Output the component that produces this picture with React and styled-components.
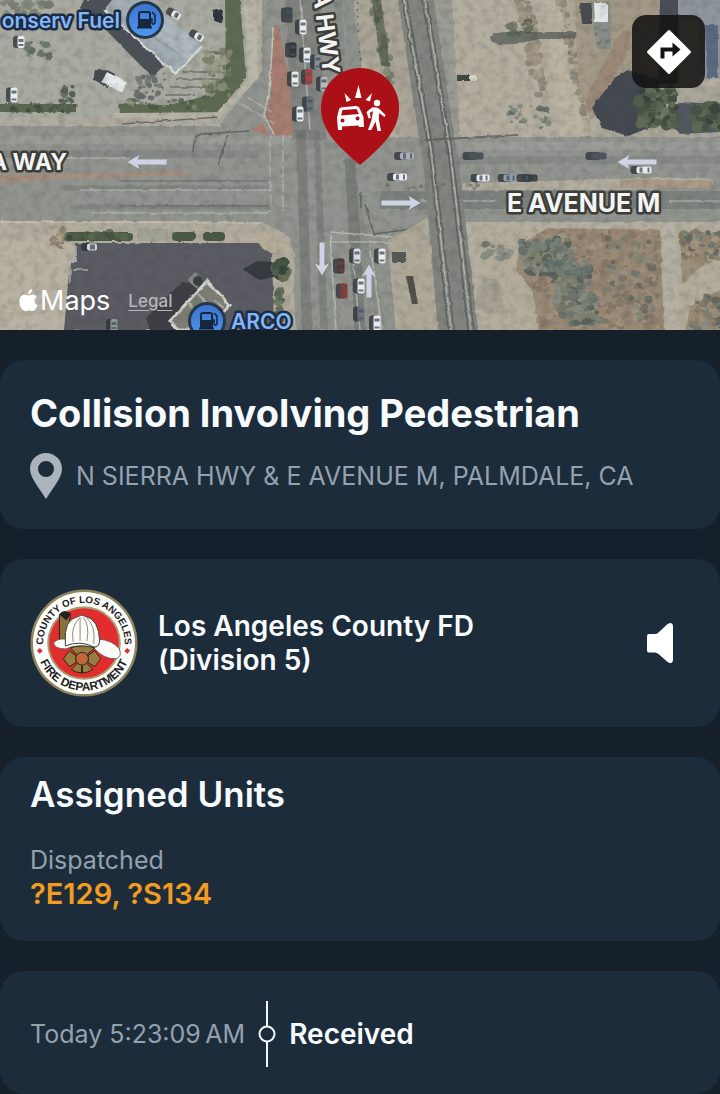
import React from "react";
import styled, { createGlobalStyle } from "styled-components";

const GlobalStyle = createGlobalStyle`
  * { box-sizing: border-box; }
  body {
    margin: 0;
    background: #15202b;
    color: #f8fbfe;
    font-family: Inter, "Liberation Sans", sans-serif;
    -webkit-font-smoothing: antialiased;
  }
  h1, h2, p { margin: 0; }
`;

const Page = styled.main`
  display: flex;
  flex-direction: column;
  gap: 30px;
`;

const MapPanel = styled.section`
  position: relative;
  height: 330px;
  overflow: hidden;
  background: #a6a294;
`;

const MapDrawing = styled.svg`
  display: block;
  width: 100%;
  height: 100%;
`;

const Attribution = styled.div`
  position: absolute;
  left: 19px;
  bottom: 12px;
  display: flex;
  align-items: center;
  gap: 18px;
`;

const MapsBrand = styled.span`
  display: flex;
  align-items: center;
  gap: 2px;
  font-size: 27px;
  line-height: 34px;
  color: #ffffff;
`;

const LegalLink = styled.a`
  font-size: 17px;
  line-height: 34px;
  font-weight: 500;
  color: #b5b6ba;
  text-underline-offset: 3px;
`;

const DirectionsButton = styled.button`
  position: absolute;
  top: 15px;
  right: 15px;
  width: 73px;
  height: 73px;
  padding: 0;
  display: grid;
  place-items: center;
  border: 0;
  border-radius: 14px;
  background: rgba(18, 18, 17, 0.87);
`;

const Card = styled.section`
  padding: ${(p) => p.$pad || "30px"};
  border-radius: 24px;
  background: #1c2c3b;
`;

const Title = styled.h1`
  font-size: 38px;
  line-height: 47px;
  font-weight: 700;
  white-space: nowrap;
`;

const Address = styled.p`
  display: flex;
  align-items: center;
  gap: 14px;
  margin-top: 16px;
  font-size: 25px;
  line-height: 46px;
  color: #94a1af;
  white-space: nowrap;
`;

const AgencyRow = styled.div`
  display: flex;
  align-items: center;
  gap: 20px;
`;

const AgencyName = styled.h2`
  flex: 1;
  max-width: 360px;
  font-size: 28px;
  line-height: 34px;
  font-weight: 600;
`;

const SoundButton = styled.button`
  display: grid;
  place-items: center;
  width: 60px;
  height: 60px;
  margin-left: auto;
  padding: 0;
  border: 0;
  background: none;
`;

const SectionTitle = styled.h2`
  font-size: 35px;
  line-height: 42px;
  font-weight: 600;
`;

const Status = styled.p`
  margin-top: 28px;
  font-size: 25px;
  line-height: 34px;
  color: #94a1af;
`;

const Units = styled.p`
  font-size: 29px;
  line-height: 34px;
  font-weight: 600;
  color: #f39c1f;
`;

const TimelineRow = styled.div`
  display: flex;
  align-items: center;
  gap: 13px;
`;

const TimeStamp = styled.time`
  font-size: 25px;
  line-height: 34px;
  color: #94a1af;
`;

const EventName = styled.strong`
  font-size: 28px;
  line-height: 34px;
  font-weight: 600;
`;

/* Seeded generator, so the scrub and the ground look the same on each load */
function seeded(seed) {
  let s = seed;
  return () => {
    s = (s * 16807) % 2147483647;
    return s / 2147483647;
  };
}

function Scatter({ seed, count, x, y, w, h, slant = 0, size = 4, colors, opacity = 0.7 }) {
  const r = seeded(seed);
  return (
    <g opacity={opacity}>
      {Array.from({ length: count }, (_, i) => {
        const py = r() * h;
        const px = x + r() * w + (slant * py) / h;
        const rad = size * (0.4 + r() * 0.8);
        return (
          <ellipse key={i} cx={px} cy={y + py} rx={rad} ry={rad * (0.6 + r() * 0.5)} fill={colors[Math.floor(r() * colors.length)]} />
        );
      })}
    </g>
  );
}

const SCRUB = ["#5f6f6b", "#6f7d77", "#848c84", "#4c5a57", "#77806f"];
const BROWN = ["#93806b", "#857260", "#a08d76", "#786a5b", "#a99a83"];
const GREEN = ["#455343", "#52624c", "#384538", "#616f56"];

function Car({ x, y, fill = "#e9ecee", rot = 0, long = 15 }) {
  const upright = rot === 90;
  return (
    <g transform={`translate(${x} ${y}) rotate(${rot})`}>
      <rect x={upright ? -long / 2 : -long / 2 - 6} y={upright ? -2 : -4} width={long} height={upright ? 10 : 8} rx="3" fill="#2b3036" opacity="0.75" />
      <rect x={-long / 2} y="-3.500" width={long} height="7" rx="2" fill={fill} />
      <rect x={-long / 2 + 3} y="-2.500" width="3" height="5" fill="#4b555e" opacity="0.8" />
      <rect x={long / 2 - 4} y="-2.500" width="2" height="5" fill="#4b555e" opacity="0.8" />
    </g>
  );
}

function LaneArrow({ x, y, rot = 0, len = 39 }) {
  const h = len / 2;
  return (
    <path
      transform={`translate(${x} ${y}) rotate(${rot})`}
      d={`M${-h} 0 L${-h + 12} -7 L${-h + 10} -2.5 H${h} V2.5 H${-h + 10} L${-h + 12} 7 Z`}
      fill="#cfd3e6"
    />
  );
}

function FuelPoi({ x, y }) {
  return (
    <g transform={`translate(${x} ${y})`}>
      <circle r="19" fill="#27374a" />
      <circle r="16" fill="url(#poi)" />
      <g fill="none" stroke="#16273c" strokeWidth="2">
        <path d="M-6 7 V-6 Q-6 -8 -4 -8 H3 Q5 -8 5 -6 V7" />
        <path d="M-8 7.500 H7" />
        <path d="M5 -1 H7 V3 Q8 5.500 10 3 V-5 L7 -8" strokeWidth="1.600" />
      </g>
      <rect x="-5" y="-1" width="9" height="8" fill="#16273c" />
    </g>
  );
}

function Label({ children, poi, size = 23, ...rest }) {
  return (
    <text
      fontFamily="Inter, sans-serif"
      fontWeight={poi ? 600 : 700}
      fontSize={size}
      fill={poi ? "#82b6f8" : "#f4f4f2"}
      stroke={poi ? "#1b2b41" : "#3d3d3a"}
      strokeWidth="5"
      strokeLinejoin="round"
      paintOrder="stroke"
      {...rest}
    >
      {children}
    </text>
  );
}

function Terrain() {
  return (
    <g>
      <rect width="720" height="330" fill="#b5afa2" />
      {/* north-west forecourt */}
      <rect width="250" height="122" fill="#a9aaa1" />
      <Scatter seed={9} count={40} x={0} y={0} w={50} h={26} size={5} colors={GREEN} opacity={0.45} />
      <Scatter seed={12} count={12} x={24} y={42} w={30} h={14} size={4} colors={GREEN} opacity={0.6} />
      <path d="M84 0 H118 L168 62 L152 77 L104 28 L80 8 Z" fill="#4c5158" />
      <path d="M112 0 H143 L202 46 L176 74 L104 10 Z" fill="#a3adb4" />
      <path d="M146 0 L202 46 L188 60 L140 24 Z" fill="#adb7bd" />
      <path d="M104 10 L176 74 L202 46" fill="none" stroke="#dcdfdb" strokeWidth="2" />
      <path d="M124 18 L181 55" stroke="#8d97a1" strokeWidth="1" />
      <g stroke="#5b6056" strokeWidth="1.500" opacity="0.7">
        <path d="M202 52 H230 M182 72 H222 M175 79 H218 M170 87 H210 M165 95 H195" />
      </g>
      <path d="M225 0 H240 L246 78 L218 112 L120 113 L118 104 L170 105 L205 96 L226 75 Z" fill="#5e6b52" />
      <Scatter seed={44} count={46} x={204} y={50} w={26} h={50} size={4} colors={["#94967e", "#5b664f", "#a2a089", "#6d755c"]} />
      <Scatter seed={45} count={36} x={138} y={74} w={28} h={24} slant={-6} size={3} colors={["#505958", "#626a68"]} />
      <Scatter seed={46} count={26} x={126} y={100} w={72} h={8} size={3} colors={["#8b8d74", "#5c6850", "#4b5643"]} />
      <path d="M244 0 H256 L258 78 L220 118 H112 V113 H216 L248 80 Z" fill="#b9b5a8" />
      <rect x="0" y="104" width="76" height="8" fill="#5b6650" />
      <Scatter seed={47} count={30} x={0} y={103} w={76} h={10} size={3} colors={GREEN} />
      <Scatter seed={48} count={18} x={61} y={86} w={12} h={20} size={3} colors={GREEN} />
      <g transform="translate(113 82) rotate(28)">
        <path d="M-22 -2 L-10 -8 H-2 V7 H-18 Z" fill="#454a4e" />
        <rect x="-10" y="-6" width="23" height="11" rx="1" fill="#e8ebec" />
      </g>
      <rect x="213" y="9" width="10" height="14" rx="4" fill="#30343a" />

      {/* east-west avenue */}
      <path d="M0 122 H222 L262 72 V0 H358 L365 137 H720 V222 H440 L388 245 L396 330 H296 L290 238 L262 222 H0 Z" fill="#92958f" />
      <path d="M0 118 H216 L222 126 H0 Z" fill="#b0ada0" />
      <path d="M0 140 H300 M440 146 H720" stroke="#9ea19b" strokeWidth="8" opacity="0.7" />
      <path d="M0 154 H260 M440 160 H720" stroke="#7b817e" strokeWidth="8" opacity="0.45" />
      <path d="M0 175 L190 171 V175 L60 179 L0 183 Z" fill="#a58f80" />
      <path d="M60 188 H270 M70 207 H270" stroke="#6e7472" strokeWidth="5" opacity="0.4" />
      <path d="M380 200 H720" stroke="#6b716f" strokeWidth="18" opacity="0.5" />
      <path d="M80 190 H270 M90 213 H268 M60 158 H130 M420 201 H496 M670 201 H720" stroke="#c4c6bf" strokeWidth="1.500" opacity="0.6" />
      <path d="M120 206 H270 M120 181 H268" stroke="#666c6a" strokeWidth="2" opacity="0.5" />
      <path d="M440 184 L640 178 H706 Q716 180 712 186 L620 190 H440 Z" fill="#b2ad9e" />
      <path d="M620 180 H706 Q716 182 710 188 L620 188 Z" fill="#ab9a87" />
      <path d="M0 224 H262 L284 232 L294 252 V330 H273 V250 L262 238 H0 Z" fill="#b1ac9e" />
      <path d="M0 222 H150 L262 223" stroke="#bfbcaf" strokeWidth="2" fill="none" />
      <path d="M137 229 H168 V241 H137 Z" fill="#a3a297" />

      {/* north-south highway */}
      <path d="M285 0 H320 L326 140 H292 Z" fill="#6f7371" opacity="0.5" />
      <path d="M296 130 H306 L312 330 H302 Z" fill="#676c6a" opacity="0.5" />
      <path d="M314 130 H320 L328 330 H320 Z" fill="#676c6a" opacity="0.4" />
      <path d="M350 158 L360 330" stroke="#5e6363" strokeWidth="11" opacity="0.45" />
      <path d="M338 0 L346 150 L383 330" stroke="#757a78" strokeWidth="8" opacity="0.3" fill="none" />
      <path d="M273 27 Q276 22 279 28 L288 70 L293 135 H272 L265 118 Q271 105 272 60 Z" fill="#a77e71" />
      <path d="M250 130 L262 124 L270 135 Z" fill="#a77e71" />
      <path d="M273 27 Q271 90 264 115 L274 135" fill="none" stroke="#c5c3b6" strokeWidth="1.500" />
      <path d="M300 0 L310 130 M330 232 L392 237 M330 242 H390 M330 234 L336 330 M352 250 L360 330 M370 245 L382 330" stroke="#bfc1bb" strokeWidth="1.500" opacity="0.8" />
      <path d="M270 135 V212 M283 135 V212" stroke="#b8bab4" strokeWidth="1.500" strokeDasharray="12 3" opacity="0.7" />
      <path d="M240 103 L275 124 M248 98 L272 112" stroke="#b8bab4" strokeWidth="1.500" opacity="0.7" />
      <path d="M193 152 Q194 136 201 134 L250 131 M218 164 L228 135 M122 124 L218 117 M365 204 L374 234 L420 228 M361 192 V208" fill="none" stroke="#565a58" strokeWidth="1.500" opacity="0.8" />

      {/* verge and railway */}
      <path d="M350 0 H402 L424 137 H398 L365 60 Z" fill="#aaa597" />
      <path d="M344 0 H354 L358 68 H350 Z" fill="#8e918b" />
      <path d="M357 2 L360 66" stroke="#6f7069" strokeWidth="1.500" strokeDasharray="2 5" />
      <path d="M372 0 H381 L390 66 H381 Z" fill="#6c7262" />
      <Scatter seed={51} count={34} x={371} y={0} w={8} h={84} slant={16} size={4} colors={GREEN} opacity={0.5} />
      <path d="M388 240 L432 216 L442 330 H398 Z" fill="#afa999" />
      <path d="M398 0 H434 L456 140 L478 330 H438 L424 170 Z" fill="#81847f" />
      <path d="M434 0 H452 L462 137 L456 150 Z" fill="#9c9c94" />
      <g fill="none" strokeWidth="1.500">
        <path d="M402 0 L429 150 L448 330 M407 0 L433 150 L454 330 M422 0 L448 150 L468 330 M427 0 L452 150 L474 330" stroke="#575b5a" opacity="0.8" />
        <path d="M404 0 L431 150 L451 330 M425 0 L450 150 L471 330" stroke="#b0b1a8" />
      </g>

      {/* north-east lots */}
      <path d="M452 0 H575 L586 135 H460 Z" fill="#b4aea0" />
      <path d="M560 0 H600 L590 135 H578 Z" fill="#afa593" />
      <path d="M545 0 H558 L590 135 H560 Z" fill="#bbb3a1" />
      <Scatter seed={61} count={90} x={517} y={0} w={13} h={95} slant={18} size={4} colors={["#9b8a74", "#857b69", "#a3937d", "#6f7163"]} opacity={0.6} />
      <Scatter seed={62} count={60} x={557} y={0} w={8} h={120} slant={24} size={3} colors={["#7c776a", "#6c6e65", "#948873"]} opacity={0.6} />
      <Scatter seed={63} count={26} x={508} y={106} w={42} h={22} size={3} colors={SCRUB} opacity={0.75} />
      <path d="M490 38 Q493 31 510 32 L600 32 V35 L560 39 H540 L515 44 Q491 46 490 38 Z" fill="#575d58" opacity="0.75" />
      <Scatter seed={67} count={14} x={510} y={22} w={22} h={12} size={4} colors={GREEN} opacity={0.6} />
      <path d="M575 0 H680 V80 H640 L590 120 L578 80 Z" fill="#a39987" />
      <path d="M622 30 L632 32 L625 60 L590 112 L584 100 Z" fill="#97806c" opacity="0.6" />
      <path d="M580 3 H592 V24 H582 Z" fill="#474c50" />
      <path d="M591 2 H611 V49 H597 Z" fill="#8b8f89" />
      <path d="M594 3 H608 V22 H595 Z" fill="#e2e6e8" />
      <Scatter seed={64} count={30} x={596} y={26} w={12} h={18} size={3} colors={["#6f7574", "#8e928d"]} />
      <path d="M678 0 H720 V80 L704 78 L696 18 L678 20 Z" fill="#90969e" />
      <path d="M660 0 H678 V84 H658 Z" fill="#494e56" />
      <path d="M705 25 H718 V78 H707 Z" fill="#5a6b82" />
      <path d="M656 86 H720 V137 H590 L600 118 Z" fill="#aaa79a" />
      <path d="M592 108 L614 78 L628 70 L660 80 L654 126 L628 136 L602 128 Z" fill="#444850" />
      <path d="M664 116 L680 102 L720 104 V132 L680 134 Z" fill="#52575f" />
      <Scatter seed={65} count={80} x={640} y={90} w={34} h={36} size={6} colors={GREEN} opacity={0.9} />
      <Scatter seed={66} count={50} x={696} y={106} w={26} h={22} size={6} colors={GREEN} opacity={0.9} />
      <rect x="457" y="75" width="13" height="6" fill="#41483f" />
      <rect x="470" y="75" width="6" height="6" fill="#d6d6cb" />
      <path d="M425 140 L518 135" stroke="#5d605a" strokeWidth="2" opacity="0.8" />

      {/* south-west lot */}
      <path d="M0 236 H72 L64 330 H0 Z" fill="#b9b2a4" />
      <path d="M75 243 H262 L272 254 L274 330 H64 L70 262 H76 Z" fill="#5b5b63" />
      <path d="M70 261 H76 V246 M72 270 H88 M70 262 V282" stroke="#b5b5af" strokeWidth="1.500" fill="none" />
      <rect x="65" y="232" width="68" height="9" rx="4" fill="#4b5845" />
      <rect x="172" y="232" width="24" height="9" rx="4" fill="#4b5845" />
      <rect x="203" y="232" width="22" height="9" rx="4" fill="#4b5845" />
      <Scatter seed={71} count={26} x={50} y={226} w={14} h={22} size={3} colors={BROWN} />
      <Scatter seed={72} count={24} x={66} y={233} w={66} h={6} size={4} colors={GREEN} />
      <path d="M256 240 L264 230 L288 246 V254 L264 250 Z" fill="#b5ad96" />
      <path d="M243 270 L256 261 L278 262 V276 L260 280 Z" fill="#363a41" />
      <Scatter seed={73} count={24} x={275} y={262} w={12} h={14} size={5} colors={GREEN} opacity={1} />
      <Scatter seed={74} count={16} x={274} y={292} w={8} h={30} size={4} colors={GREEN} opacity={0.8} />
      <path d="M146 318 L182 282 L205 285 L196 330 H150 Z" fill="#3d3e45" />
      <path d="M170 321 L207 281 L230 305 L208 330 H178 Z" fill="#7d7e76" stroke="#d2d3cc" strokeWidth="3" />
      <path d="M198 294 L218 315 M188 303 L198 314 M214 300 L224 308" stroke="#a9aaa2" strokeWidth="2" fill="none" />
      <rect x="190" y="275" width="12" height="11" transform="rotate(40 196 280)" fill="#858982" />
      <circle cx="198" cy="281" r="5" fill="#3a4043" />

      {/* south-east scrub */}
      <path d="M478 228 H720 V330 H484 Z" fill="#b4ad9c" />
      <path d="M548 228 L660 230 L664 330 H540 L532 290 L516 270 L520 244 Z" fill="#998977" />
      <path d="M680 232 H720 V250 L682 284 Z" fill="#9c8f7a" />
      <path d="M720 290 L690 306 L686 330 H720 Z" fill="#9c8f7a" />
      <Scatter seed={81} count={340} x={536} y={232} w={124} h={96} size={4} colors={BROWN} opacity={0.55} />
      <Scatter seed={82} count={150} x={516} y={240} w={52} h={34} slant={14} size={4} colors={SCRUB} opacity={0.8} />
      <Scatter seed={83} count={180} x={548} y={262} w={40} h={62} slant={14} size={4} colors={SCRUB} opacity={0.8} />
      <Scatter seed={84} count={50} x={606} y={238} w={46} h={80} size={4} colors={SCRUB} opacity={0.55} />
      <Scatter seed={85} count={24} x={484} y={244} w={26} h={14} size={4} colors={SCRUB} opacity={0.6} />
      <Scatter seed={86} count={70} x={682} y={232} w={40} h={28} size={4} colors={SCRUB.concat(BROWN)} />
      <Scatter seed={87} count={60} x={694} y={298} w={30} h={32} size={4} colors={SCRUB.concat(BROWN)} />
      <path d="M662 224 H676 L679 330 H665 Z" fill="#b5b1a4" />
      <ellipse cx="490" cy="296" rx="14" ry="18" fill="#8c8c81" opacity="0.35" />
      <path d="M406 276 H413 L418 304 H412 Z" fill="#50524a" />
      <rect x="392" y="252" width="14" height="10" fill="#575a55" />
      <Scatter seed={91} count={30} x={380} y={184} w={100} h={5} size={2} colors={["#666a61", "#86867a"]} />
    </g>
  );
}

function Traffic() {
  return (
    <g>
      <Car x={14} y={95} rot={90} />
      <Car x={21} y={42} rot={90} long={12} />
      <Car x={176} y={15} rot={30} long={9} />
      <Car x={199} y={37} rot={30} long={9} />
      <Car x={92} y={247} long={10} fill="#cfd4dd" />
      <Car x={114} y={325} rot={90} long={12} fill="#8a9a98" />
      <Car x={289} y={15} rot={90} fill="#3f464d" />
      <Car x={303} y={27} rot={90} />
      <Car x={293} y={50} rot={90} fill="#33393f" />
      <Car x={307} y={55} rot={90} />
      <Car x={295} y={79} rot={90} />
      <Car x={309} y={77} rot={90} fill="#b04038" />
      <Car x={324} y={84} rot={90} fill="#b5bab8" />
      <Car x={310} y={104} rot={90} fill="#66717b" />
      <Car x={300} y={114} rot={90} />
      <Car x={318} y={62} rot={90} fill="#85919a" />
      <Car x={382} y={256} rot={90} />
      <Car x={357} y={256} rot={90} fill="#d5dbe2" />
      <Car x={341} y={266} rot={90} fill="#5b3437" />
      <Car x={344} y={291} rot={90} fill="#8b3a38" />
      <Car x={361} y={286} rot={90} />
      <Car x={361} y={314} rot={90} fill="#6e767b" />
      <Car x={377} y={323} rot={90} />
      <Car x={407} y={156} fill="#a7b0b8" long={14} />
      <Car x={476} y={156} fill="#4b535a" />
      <Car x={599} y={156} fill="#4b535a" />
      <Car x={400} y={177} long={14} />
      <Car x={483} y={178} long={13} />
      <Car x={510} y={178} long={13} fill="#8f9dad" />
      <Car x={530} y={178} fill="#373d41" />
      <Car x={644} y={170} />
    </g>
  );
}

function IncidentPin() {
  return (
    <g>
      <path d="M360 68 C382 68 399 86 399 108 C399 129 384 145 360 165 C336 145 321 129 321 108 C321 86 338 68 360 68 Z" fill="#ab1016" />
      <g fill="#ffffff">
        <path d="M358.500 85 L361.500 98 H355 Z M344.500 93 L351 100 L346.500 102 Z M372 93 L370 101.500 L365.500 100 Z" />
        <path
          fillRule="evenodd"
          d="M337 118 L339 109 Q340 107.500 342 107.300 L356 106 Q358.500 106 359.500 108 L363.500 117 L364 127 H359 L358.500 125.500 L342 126.500 V130 H338 Z M341 115.500 L359 114 L356.500 109 L342.500 110 Z M342.500 118.500 A2 2 0 1 0 342.500 122.500 A2 2 0 1 0 342.500 118.500 Z M357.500 116.500 A2 2 0 1 0 357.500 120.500 A2 2 0 1 0 357.500 116.500 Z"
        />
        <circle cx="377" cy="103" r="3.200" />
        <path d="M372 107.500 L366.500 112 L368.500 118.500 L370.800 117.800 L369.800 113 L373 111 L371.500 120 L368 130 H371.300 L375.500 121.500 L377.500 131 H381 L378.800 119 L379.200 113 L384.500 117 L385.600 115 L379.500 109 Q377 106.500 372 107.500 Z" />
      </g>
    </g>
  );
}

function MapCanvas() {
  return (
    <MapDrawing viewBox="0 0 720 330" preserveAspectRatio="xMidYMid slice">
      <defs>
        <linearGradient id="poi" x1="0" y1="0" x2="0" y2="1">
          <stop offset="0" stopColor="#3a74cf" />
          <stop offset="1" stopColor="#4f95ee" />
        </linearGradient>
        <filter id="aerial" x="0" y="0" width="100%" height="100%" colorInterpolationFilters="sRGB">
          <feTurbulence type="fractalNoise" baseFrequency="0.12" numOctaves="3" seed="4" result="noise" />
          <feDisplacementMap in="SourceGraphic" in2="noise" xChannelSelector="R" yChannelSelector="G" scale="3" result="rough" />
          <feGaussianBlur in="rough" stdDeviation="0.500" />
        </filter>
        <filter id="grain" x="0" y="0" width="100%" height="100%" colorInterpolationFilters="sRGB">
          <feTurbulence type="fractalNoise" baseFrequency="0.120" numOctaves="5" seed="8" />
          <feColorMatrix values="0 0 0 0 0.25  0 0 0 0 0.26  0 0 0 0 0.24  1.500 0 0 0 -0.600" />
        </filter>
      </defs>
      <g filter="url(#aerial)">
        <Terrain />
      </g>
      <rect width="720" height="330" filter="url(#grain)" opacity="0.28" />
      <Traffic />
      <LaneArrow x={147} y={162} />
      <LaneArrow x={637} y={162} />
      <LaneArrow x={401} y={203} rot={180} />
      <LaneArrow x={322} y={259} rot={-90} len={33} />
      <LaneArrow x={369} y={281} rot={90} len={33} />
      <Label x="67" y="170" textAnchor="end">A WAY</Label>
      <Label x="507" y="212" size={25}>E AVENUE M</Label>
      <Label transform="translate(330 74) rotate(83)" x="0" y="7" textAnchor="end" size={24}>A HWY</Label>
      <Label x="120" y="28" textAnchor="end" size={21} poi>onserv Fuel</Label>
      <FuelPoi x={145} y={20} />
      <Label x="231" y="329" size={21} poi>ARCO</Label>
      <FuelPoi x={207} y={321} />
      <IncidentPin />
    </MapDrawing>
  );
}

function AppleMark() {
  return (
    <svg width="19" height="24" viewBox="0 0 19 24" fill="#ffffff" aria-hidden="true">
      <path d="M13.200 0 C13.300 2.800 11.400 5 9 5 C8.900 2.500 10.800 .3 13.200 0 Z" />
      <path d="M9.600 6.500 C10.500 6.500 11.700 5.500 13.500 5.500 C15.400 5.500 17 6.500 17.900 7.900 C14.500 9.900 15 14.500 18.600 16 C17.800 18.500 15.900 22 13.700 22 C12.300 22 11.600 21.200 9.900 21.200 C8.200 21.200 7.500 22 6.200 22 C3.500 22 .4 17 .4 12.500 C.4 8 3 5.600 5.900 5.600 C7.500 5.600 8.700 6.500 9.600 6.500 Z" />
    </svg>
  );
}

function TurnSign() {
  return (
    <svg width="46" height="46" viewBox="0 0 46 46" aria-hidden="true">
      <path d="M23 2.500 L43.500 23 L23 43.500 L2.500 23 Z" fill="#ffffff" stroke="#ffffff" strokeWidth="3" strokeLinejoin="round" />
      <path d="M16.500 29.500 V20.500 H27" fill="none" stroke="#141413" strokeWidth="4" />
      <path d="M26.500 13.500 L34.500 20.500 L26.500 27.500 Z" fill="#141413" />
    </svg>
  );
}

function PlaceMark() {
  return (
    <svg width="32" height="46" viewBox="0 0 32 46" aria-hidden="true">
      <path
        fillRule="evenodd"
        fill="#abb3bd"
        d="M16 0 C24.800 0 32 7 32 15.500 C32 24 25 32 16 46 C7 32 0 24 0 15.500 C0 7 7.200 0 16 0 Z M16 8 A8 8 0 1 0 16 24 A8 8 0 1 0 16 8 Z"
      />
    </svg>
  );
}

function Seal() {
  return (
    <svg width="108" height="108" viewBox="0 0 110 110" role="img" aria-label="County of Los Angeles Fire Department">
      <defs>
        <path id="sealTop" d="M14 62 A41.500 41.500 0 1 1 96 62" />
        <path id="sealBottom" d="M8 67 A48.500 48.500 0 0 0 102 67" />
      </defs>
      <circle cx="55" cy="55" r="54.500" fill="#8e855f" />
      <circle cx="55" cy="55" r="52" fill="#fdfdfb" />
      <circle cx="55" cy="55" r="37.500" fill="#a99c71" />
      <circle cx="55" cy="55" r="35.500" fill="#e22d2f" />
      <g fontFamily="Liberation Sans, sans-serif" fontWeight="700" fill="#1c1c22" textAnchor="middle">
        <text fontSize="10"><textPath href="#sealTop" startOffset="50%">COUNTY OF LOS ANGELES</textPath></text>
        <text fontSize="12"><textPath href="#sealBottom" startOffset="50%">FIRE DEPARTMENT</textPath></text>
      </g>
      <path d="M10 60 L13 63 L10 66 L7 63 Z M99 60 L102 63 L99 66 L96 63 Z" fill="#d9303c" />
      <path d="M30 56 L30 26 Q36 20 41 27 L37 56 Z" fill="#8a713b" stroke="#2a2418" strokeWidth="1" />
      <path d="M30 26 Q34 20 42 25 L37 32 Z" fill="#25211d" />
      <path d="M24 55 Q28 50 36 51 Q52 46 69 51 Q84 52 91 61 Q94 69 88 71 Q76 72 66 61 Q50 55 36 61 Q25 61 24 55 Z" fill="#fbfbf8" stroke="#55504a" strokeWidth="0.800" />
      <path d="M36 55 Q34 31 49 28 Q52 25 57 28 Q70 31 71 53 Q70 60 65 59 Q51 52 36 58 Z" fill="#fdfdfa" stroke="#3c3832" strokeWidth="1" />
      <path d="M44 54 Q41 38 51 29 M51 53 V29 M58 53 Q61 36 54 29 M65 56 Q67 36 57 29" fill="none" stroke="#8d8a80" strokeWidth="1" />
      <g fill="#987d42" stroke="#2d2616" strokeWidth="1">
        <path d="M41 60 Q53 56 66 60 L58 67 H48 Z" />
        <path d="M47 68 L40 63 L34 71 L40 79 L47 75 Z M59 68 L66 63 L72 71 L66 79 L59 75 Z" />
        <path d="M48 76 L42 82 Q53 89 64 82 L58 76 Z" />
        <circle cx="53" cy="71" r="6.500" fill="#c0663a" />
      </g>
      <path d="M53 78 V86" stroke="#2d2616" strokeWidth="2" />
    </svg>
  );
}

function SpeakerMark() {
  return (
    <svg width="28" height="42" viewBox="0 0 28 42" aria-hidden="true">
      <path d="M3 12 H9 Q11 12 12.500 10.500 L21 2.500 Q23.500 .3 25.300 1.200 Q27 2 27 4 V38 Q27 40.200 25.300 40.900 Q23.500 41.700 21 39.500 L12.500 32 Q11 30.500 9 30.500 H3 Q1 30.500 1 28.500 V14 Q1 12 3 12 Z" fill="#ffffff" />
    </svg>
  );
}

function TimelineMark() {
  return (
    <svg width="18" height="66" viewBox="0 0 18 66" fill="none" stroke="#f4f8fb" strokeWidth="2" aria-hidden="true">
      <path d="M9 0 V25 M9 41 V66" />
      <circle cx="9" cy="33" r="7.500" />
    </svg>
  );
}

export default function App() {
  return (
    <>
      <GlobalStyle />
      <Page>
        <MapPanel aria-label="Incident map">
          <MapCanvas />
          <Attribution>
            <MapsBrand><AppleMark />Maps</MapsBrand>
            <LegalLink href="#legal">Legal</LegalLink>
          </Attribution>
          <DirectionsButton type="button" aria-label="Directions"><TurnSign /></DirectionsButton>
        </MapPanel>

        <Card>
          <Title>Collision Involving Pedestrian</Title>
          <Address><PlaceMark />N SIERRA HWY &amp; E AVENUE M, PALMDALE, CA</Address>
        </Card>

        <Card>
          <AgencyRow>
            <Seal />
            <AgencyName>Los Angeles County FD (Division 5)</AgencyName>
            <SoundButton type="button" aria-label="Play audio"><SpeakerMark /></SoundButton>
          </AgencyRow>
        </Card>

        <Card $pad="16px 30px 30px">
          <SectionTitle>Assigned Units</SectionTitle>
          <Status>Dispatched</Status>
          <Units>?E129, ?S134</Units>
        </Card>

        <Card $pad="30px 30px 27px">
          <TimelineRow>
            <TimeStamp>Today 5:23:09{"\u202f"}AM</TimeStamp>
            <TimelineMark />
            <EventName>Received</EventName>
          </TimelineRow>
        </Card>
      </Page>
    </>
  );
}
